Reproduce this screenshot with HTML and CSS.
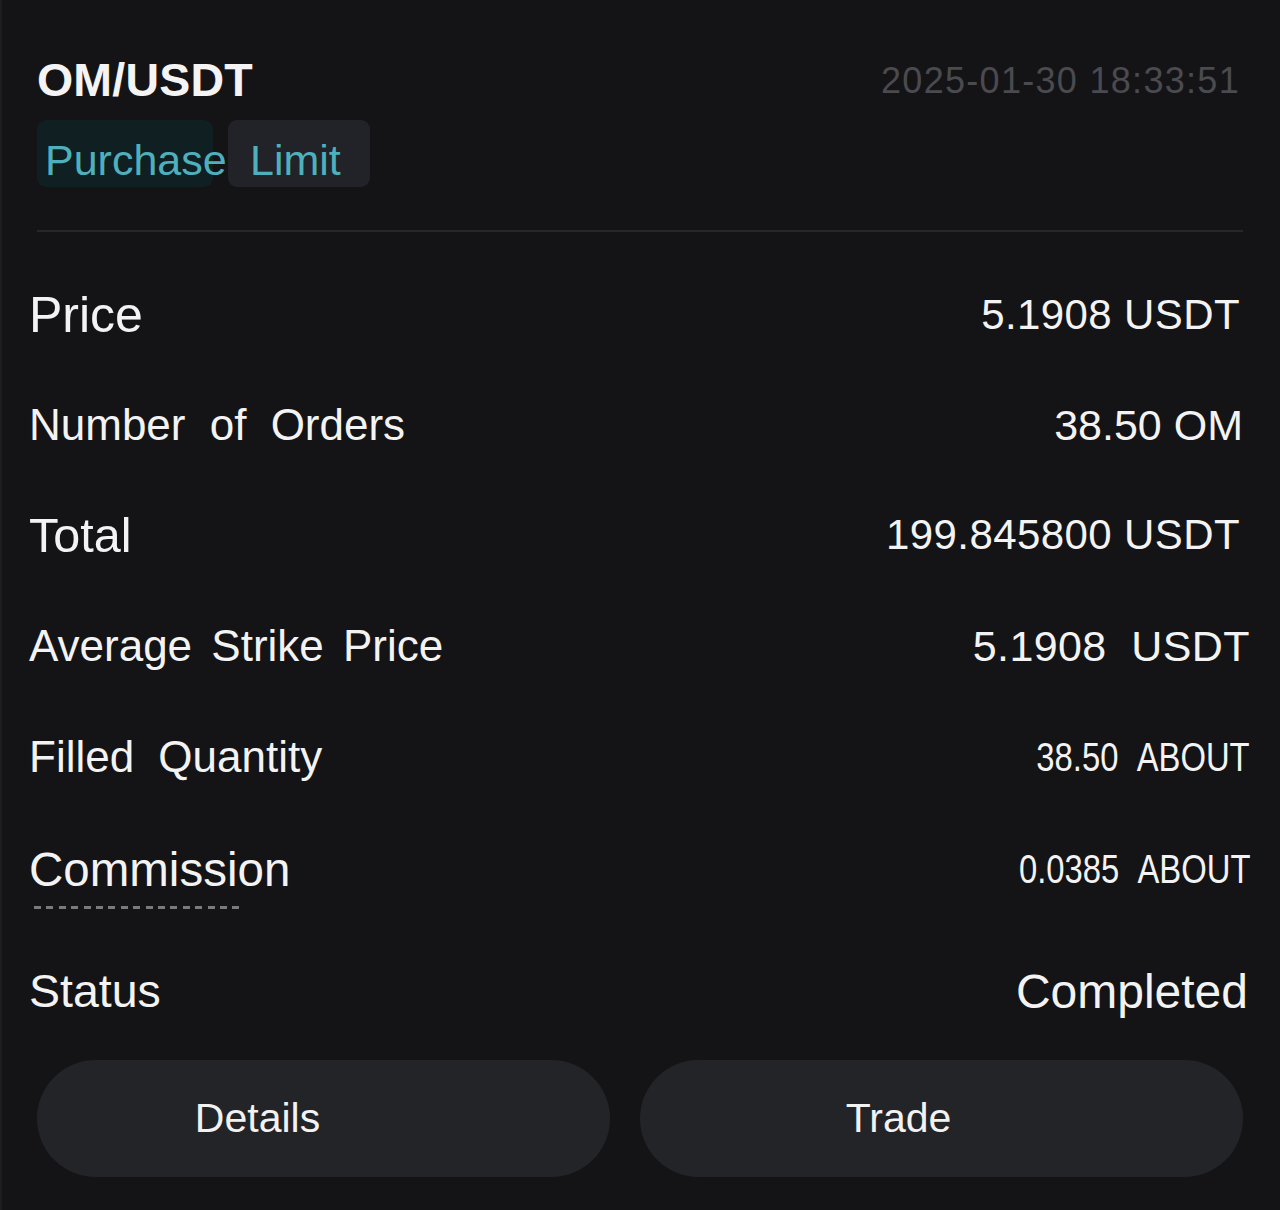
FILE: index.html
```html
<!DOCTYPE html>
<html lang="en">
<head>
<meta charset="utf-8">
<title>OM/USDT order</title>
<link rel="stylesheet" href="styles.css">
</head>
<body>
<main class="card">
  <header class="head">
    <div class="head-left">
      <h1 class="pair">OM/USDT</h1>
      <div class="tags">
        <span class="tag tag-side">Purchase</span>
        <span class="tag tag-type">Limit</span>
      </div>
    </div>
    <div class="date">2025-01-30 18:33:51</div>
  </header>
  <div class="sep"></div>

  <section class="rows">
    <div class="row r1">
      <span class="label lg">Price</span>
      <span class="value v-in">5.1908 USDT</span>
    </div>
    <div class="row r2">
      <span class="label md wide">Number of Orders</span>
      <span class="value v-in2">38.50 OM</span>
    </div>
    <div class="row r3">
      <span class="label lg3">Total</span>
      <span class="value v-in">199.845800 USDT</span>
    </div>
    <div class="row r4">
      <span class="label md mid">Average Strike Price</span>
      <span class="value v-avg">5.1908&nbsp; USDT</span>
    </div>
    <div class="row r5">
      <span class="label md wide">Filled Quantity</span>
      <span class="value narrow">38.50&nbsp;&nbsp;ABOUT</span>
    </div>
    <div class="row r6">
      <div class="label-col">
        <span class="label lg4">Commission</span>
        <div class="dash"></div>
      </div>
      <span class="value narrow">0.0385&nbsp;&nbsp;ABOUT</span>
    </div>
    <div class="row r7">
      <span class="label lg2">Status</span>
      <span class="value status">Completed</span>
    </div>
  </section>

  <footer class="actions">
    <button class="btn btn-details">Details</button>
    <button class="btn btn-trade">Trade</button>
  </footer>
</main>
</body>
</html>
```

FILE: styles.css
```css
* { box-sizing: border-box; }

html, body {
  margin: 0;
  padding: 0;
  background: #141417;
}

body {
  width: 1280px;
  height: 1210px;
  overflow: hidden;
  font-family: "Liberation Sans", Arial, sans-serif;
  color: #f2f2f2;
  border-left: 2px solid #1d1d20;
}

.card {
  padding: 54px 30px 0 25px;
}

.head {
  display: flex;
  justify-content: space-between;
  align-items: flex-start;
  padding: 0 10px 0 10px;
}

.pair {
  margin: 0;
  font-size: 46.5px;
  line-height: 52px;
  font-weight: 700;
  color: #f4f4f4;
  letter-spacing: 0.2px;
}

.tags {
  display: flex;
  margin-top: 14px;
}

.tag {
  display: block;
  height: 67px;
  padding-top: 16px;
  line-height: 49px;
  font-size: 43px;
  color: #4fb0bd;
  border-radius: 9px;
  white-space: nowrap;
}

.tag-side {
  width: 176px;
  padding-left: 8px;
  background: #0f1f22;
}

.tag-type {
  margin-left: 15px;
  padding-left: 22px;
  padding-right: 29px;
  background: #222328;
}

.date {
  margin-top: 5px;
  font-size: 36px;
  line-height: 44px;
  letter-spacing: 1.3px;
  color: #4a4a4f;
}

.sep {
  height: 2px;
  margin: 43px 7px 0 10px;
  background: #26272b;
}

.rows {
  margin-top: 28px;
  display: flex;
  flex-direction: column;
}

.row {
  display: flex;
  justify-content: space-between;
  align-items: center;
  height: 110px;
  padding-left: 2px;
}

.r4 { height: 112px; }
.r6 { height: 120px; align-items: flex-start; padding-top: 30px; }
.r7 { height: 118px; }

.label {
  white-space: nowrap;
  color: #f3f3f3;
}

.lg { font-size: 50px; }
.lg2 { font-size: 46.5px; }
.lg3 { font-size: 48.5px; }
.lg4 { font-size: 47.5px; }
.md { font-size: 44px; }
.wide { word-spacing: 12px; }
.mid { word-spacing: 7px; }

.label-col {
  display: flex;
  flex-direction: column;
}

.dash {
  width: 210px;
  height: 3px;
  margin: 9px 0 0 5px;
  background: repeating-linear-gradient(90deg, #7a7a7e 0 7px, transparent 7px 12.4px);
}

.value {
  white-space: nowrap;
  font-size: 42px;
  color: #f3f3f3;
}

.v-in { margin-right: 10px; letter-spacing: 0.4px; }
.v-in2 { margin-right: 7px; font-size: 43px; }
.v-avg { font-size: 43px; letter-spacing: 0.4px; }

.narrow {
  font-size: 41px;
  transform: scaleX(0.8);
  transform-origin: right center;
}

.r6 .narrow { margin-top: 4px; }

.status {
  font-size: 48px;
  margin-right: 2px;
}

.actions {
  display: grid;
  grid-template-columns: 573px 603px;
  column-gap: 30px;
  margin-top: 10px;
  padding-left: 10px;
}

.btn {
  height: 117px;
  border: none;
  border-radius: 59px;
  background: #232428;
  color: #f2f2f2;
  font-family: "Liberation Sans", Arial, sans-serif;
  font-size: 41px;
  cursor: pointer;
}

.btn-details { padding-right: 138px; }
.btn-trade { padding-right: 92px; }
```
